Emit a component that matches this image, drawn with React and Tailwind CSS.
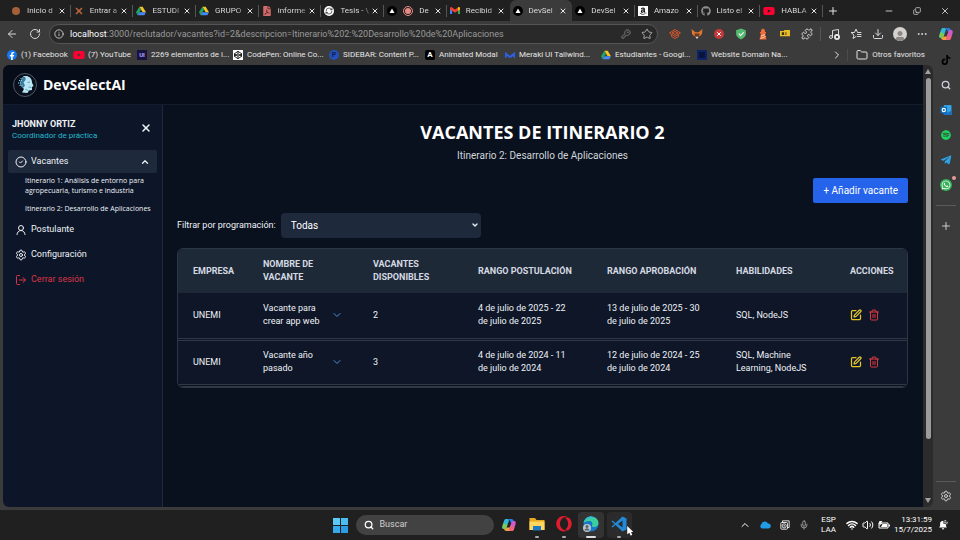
import React from "react";
import {
  ArrowLeft, RotateCw, Info, Search, Star, Puzzle, Music, Download, Plus, Minus, X, Copy, Ellipsis,
  ChevronRight, ChevronDown, ChevronUp, Folder, CircleCheck, UserRound, Settings, LogOut, SquarePen,
  Trash2, Wifi, Volume2, Mic, KeyRound, RefreshCw,
} from "lucide-react";
import {
  FaFacebookF, FaYoutube, FaAmazon, FaGithub, FaCodepen, FaSpotify, FaTelegramPlane,
  FaWhatsapp, FaTiktok, FaOpera, FaFilePdf, FaUser,
} from "react-icons/fa";

const Drive = () => (
  <svg viewBox="0 0 24 22" className="h-2.5 w-2.5 shrink-0">
    <path d="M8 1h8l8 13h-8z" fill="#f7c325" />
    <path d="M8 1l4 7-8 13-4-7z" fill="#1fa463" />
    <path d="M8 14h16l-4 7H4z" fill="#4688f4" />
  </svg>
);

const Gmail = () => (
  <svg viewBox="0 0 24 18" className="w-2.5 shrink-0">
    <path d="M0 3v15h5V6z" fill="#4285f4" />
    <path d="M24 3v15h-5V6z" fill="#34a853" />
    <path d="M0 3c0-3 3-4 5-2l7 5 7-5c2-2 5-1 5 2v3l-12 8L0 6z" fill="#ea4335" />
    <path d="M19 1c2-2 5-1 5 2v3l-5 3z" fill="#fbbc04" />
  </svg>
);

const Vercel = () => (
  <svg viewBox="0 0 20 20" className="h-2.5 w-2.5 shrink-0">
    <circle cx="10" cy="10" r="10" fill="#000" />
    <path d="M10 5l5 9H5z" fill="#fff" />
  </svg>
);

const Record = () => (
  <svg viewBox="0 0 20 20" className="h-2.5 w-2.5 shrink-0">
    <circle cx="10" cy="10" r="9" fill="none" stroke="#e88b86" strokeWidth="2" />
    <circle cx="10" cy="10" r="6" fill="#e88b86" />
  </svg>
);

const Youtube = () => <FaYoutube className="h-3 w-3 shrink-0 text-[#ff0033]" />;

const Copilot = () => (
  <svg viewBox="0 0 28 26" className="h-3.5 w-3.5 shrink-0">
    <path d="M9 1h10c3 0 4 2 5 5l1 3h-7l-2-4c-1-3-4-4-7-4z" fill="#2a7de8" />
    <path d="M9 1c4 0 6 1 4 6L9 18c-1 3-3 3-5 3-4 0-4-3-3-7L4 5c1-3 2-4 5-4z" fill="#35b8d8" />
    <path d="M3 9l-2 6c-1 4 0 6 4 6 2 0 3 0 4-3l2-5z" fill="#7fc950" />
    <path d="M19 25H9c-3 0-4-2-5-4 3 0 4-1 5-3h7l2 4c1 2 1 3 1 3z" fill="#f2a33c" />
    <path d="M19 25c-4 0-6-1-4-6l4-11c1-3 3-3 5-3 4 0 4 3 3 7l-3 9c-1 3-2 4-5 4z" fill="#d65ac6" />
    <path d="M19 25c-4 0-6-1-4-6l2-5 8 4-1 3c-1 3-2 4-5 4z" fill="#f0657a" />
  </svg>
);

const tabs = [
  { title: "Inicio d", icon: <span className="mx-px h-2 w-2 shrink-0 rounded-full bg-[#a5603a]" /> },
  { title: "Entrar a", icon: <X className="h-2.5 w-2.5 shrink-0 text-[#b8643a]" strokeWidth={4} /> },
  { title: "ESTUDI", icon: <Drive /> },
  { title: "GRUPO", icon: <Drive /> },
  { title: "informe", icon: <FaFilePdf className="h-2.5 w-2.5 shrink-0 text-[#d66a6a]" /> },
  { title: "Tesis - \\", icon: <span className="flex h-2.5 w-2.5 shrink-0 items-center justify-center rounded-full bg-white"><RefreshCw className="h-2 w-2 text-[#222]" /></span> },
  { title: "De", icon: <><Vercel /><span className="pl-1.5"><Record /></span></> },
  { title: "Recibid", icon: <Gmail /> },
  { title: "DevSel", icon: <Vercel />, active: true },
  { title: "DevSel", icon: <Vercel /> },
  { title: "Amazo", icon: <span className="flex h-2.5 w-2.5 shrink-0 items-center justify-center bg-white"><FaAmazon className="h-2 w-2 text-black" /></span> },
  { title: "Listo el", icon: <FaGithub className="h-2.5 w-2.5 shrink-0 text-[#8d8d8d]" /> },
  { title: "HABLA", icon: <Youtube /> },
];

function TabBar() {
  return (
    <div className="flex h-[21px] items-stretch bg-[#202020] pl-2 text-[8px] text-[#e4e4e4]">
      <div className="flex min-w-0 flex-1">
        {tabs.map((t, i) => (
          <div
            key={i}
            className={
              t.active
                ? "flex min-w-0 flex-1 items-center rounded-t-md bg-[#3b3b3b] pl-[3px]"
                : "flex min-w-0 flex-1 items-center pl-[3px]"
            }
          >
            {t.icon}
            <span className="ml-1.5 min-w-0 flex-1 bg-linear-to-r from-[#e8e8e8] from-70% to-[#e8e8e8]/20 bg-clip-text whitespace-nowrap text-transparent">
              {t.title}
            </span>
            <button aria-label="Cerrar pestaña" className="mr-1 shrink-0">
              <X className="h-2 w-2" strokeWidth={3} />
            </button>
            <span className={t.active || i === 7 ? "w-px" : "h-3 w-px bg-[#555]"} />
          </div>
        ))}
      </div>
      <div className="flex w-[137px] items-center pl-1">
        <button aria-label="Nueva pestaña"><Plus className="h-3 w-3" /></button>
        <div className="flex flex-1 items-center justify-end gap-[19px] pr-2.5">
          <button aria-label="Minimizar"><Minus className="h-2.5 w-2.5" /></button>
          <button aria-label="Restaurar"><Copy className="h-2 w-2 -scale-x-100 rotate-180" /></button>
          <button aria-label="Cerrar"><X className="h-2.5 w-2.5" /></button>
        </div>
      </div>
    </div>
  );
}

const Shield = () => (
  <svg viewBox="0 0 22 22" className="h-3 w-3">
    <path d="M11 1l9 3v6c0 6-5 9-9 11-4-2-9-5-9-11V4z" fill="#55b870" />
    <path d="M7 10l3 4 6-6" fill="none" stroke="#fff" strokeWidth="2" />
  </svg>
);

const Mesh = () => (
  <svg viewBox="0 0 24 20" className="h-3 w-3" fill="none" stroke="#d9562b" strokeWidth="2">
    <path d="M1 8l11-7 11 7-11 7zM5 11v4l7 4 7-4v-4M6 8l6-3 6 3-6 3z" />
  </svg>
);

const Fox = () => (
  <svg viewBox="0 0 22 22" className="h-3 w-3">
    <path d="M1 2l7 6h6l7-6-1 9-4 4H6l-4-4z" fill="#e07832" />
    <path d="M6 10h10l-2 7-3 2-3-2z" fill="#6b3a20" />
    <path d="M8 16h6l-3 4z" fill="#ddd" />
  </svg>
);

const FavStar = () => (
  <svg viewBox="0 0 24 24" className="h-3 w-3" fill="none" stroke="currentColor" strokeWidth="2" strokeLinejoin="round" strokeLinecap="round">
    <path d="M12 17l-6 4 2-7-6-5h7l3-7 3 7h7M15 13h7M15 17h7" />
  </svg>
);

const extensions = [
  { name: "Capas", icon: <Mesh /> },
  { name: "Cartera", icon: <Fox /> },
  { name: "Bloqueador", icon: <span className="flex h-2.5 w-2.5 items-center justify-center rounded-full bg-[#c43a3a]"><X className="h-1.5 w-1.5 text-white" strokeWidth={4} /></span> },
  { name: "Protección", icon: <Shield /> },
  {
    name: "Faro",
    icon: (
      <svg viewBox="0 0 20 24" className="h-3 w-3">
        <path d="M6 8V4l4-3 4 3v4h2v3h-2l3 12H3l3-12H4V8z" fill="#ef6c3a" />
        <path d="M6 16l8-3M5 21l10-4" stroke="#ffd0a8" strokeWidth="2" />
      </svg>
    ),
  },
  {
    name: "Notas",
    icon: (
      <svg viewBox="0 0 22 14" className="w-2.5">
        <path d="M0 2h8l2-2h12v14H0z" fill="#e8bd2c" />
        <path d="M4 5h5v6H4zM12 5h2v6h-2z" fill="#3a2f08" />
      </svg>
    ),
  },
  { name: "Extensiones", icon: <Puzzle className="h-3 w-3" /> },
  {
    name: "Multimedia",
    icon: (
      <span className="relative">
        <Music className="h-3 w-3" />
        <span className="absolute right-0 bottom-0 h-1.5 w-1.5 rounded-full bg-[#e4e4e4] p-0.5"><span className="block h-full bg-[#3b3b3b]" /></span>
      </span>
    ),
  },
  { name: "Favoritos", icon: <FavStar /> },
  { name: "Descargas", icon: <Download className="h-3 w-3" /> },
  { name: "Perfil", icon: <span className="flex h-3.5 w-3.5 items-end justify-center overflow-hidden rounded-full bg-[#d4d1ce]"><FaUser className="h-2.5 w-2.5 text-[#8a8785]" /></span> },
  { name: "Más", icon: <Ellipsis className="h-3 w-3" /> },
];

function Toolbar() {
  return (
    <div className="flex h-[25px] items-center text-[#d8d8d8]">
      <button aria-label="Atrás" className="ml-1.5"><ArrowLeft className="h-3 w-3" /></button>
      <button aria-label="Recargar" className="ml-[11px]"><RotateCw className="h-3 w-3" /></button>
      <div className="ml-2 flex h-5 min-w-0 flex-1 items-center rounded-full border border-[#555] bg-[#292929] pr-1 pl-1">
        <Info className="h-2.5 w-2.5 shrink-0" />
        <span className="ml-1.5 min-w-0 flex-1 whitespace-nowrap text-[9px] leading-3 text-[#9a9a9a]">
          <span className="text-white">localhost</span>:3000/reclutador/vacantes?id=2&amp;descripcion=Itinerario%202:%20Desarrollo%20de%20Aplicaciones
        </span>
        <button aria-label="Contraseñas"><KeyRound className="h-2.5 w-2.5 text-[#8a8a8a]" /></button>
        <button aria-label="Añadir a favoritos" className="ml-2.5"><Star className="h-3 w-3 text-[#aaa]" /></button>
      </div>
      <div className="ml-1.5 flex shrink-0 items-center">
        {extensions.map((e, i) => (
          <React.Fragment key={e.name}>
            <button aria-label={e.name} className="flex w-[22px] items-center justify-center">{e.icon}</button>
            {i === 6 && <span className="mx-0.5 h-3.5 w-px bg-[#555]" />}
          </React.Fragment>
        ))}
      </div>
    </div>
  );
}

const bookmarks = [
  { label: "(1) Facebook", w: "w-[67px]", icon: <span className="flex h-2.5 w-2.5 items-end justify-center rounded-full bg-[#1877f2]"><FaFacebookF className="h-2 w-2 text-white" /></span> },
  { label: "(7) YouTube", w: "w-[63px]", icon: <Youtube /> },
  { label: "2269 elementos de i...", w: "w-[96px]", icon: <span className="h-2.5 w-2.5 bg-[#17123f] text-center text-[6px] leading-[10px] font-bold text-[#b9a8ff]">UI</span> },
  { label: "CodePen: Online Co...", w: "w-[96px]", icon: <span className="flex h-2.5 w-2.5 items-center justify-center bg-white"><FaCodepen className="h-2 w-2 text-black" /></span> },
  { label: "SIDEBAR: Content P...", w: "w-[96px]", icon: <span className="flex h-2.5 w-2.5 items-center justify-center rounded-full bg-[#2450b8] text-[7px] font-bold text-[#0f2150]">P</span> },
  { label: "Animated Modal", w: "w-[80px]", icon: <span className="flex h-2.5 w-2.5 items-center justify-center rounded-xs bg-black text-[8px] font-bold text-white">A</span> },
  {
    label: "Meraki UI Tailwind...",
    w: "w-[96px]",
    icon: (
      <svg viewBox="0 0 24 20" className="h-2.5 w-2.5">
        <path d="M0 19V2l12 10L24 2v17l-5-6-7 5-7-5z" fill="#2f5fe0" />
      </svg>
    ),
  },
  { label: "Estudiantes - Googl...", w: "w-[96px]", icon: <Drive /> },
  { label: "Website Domain Na...", w: "w-[96px]", icon: <span className="h-2.5 w-2.5 bg-[#0d2468] p-0.5"><span className="block h-full bg-[#08143a]" /></span> },
];

function Bookmarks() {
  return (
    <div className="flex h-[19px] items-center pb-px pl-[7px] text-[8px] text-[#e6e6e6]">
      {bookmarks.map((b) => (
        <a key={b.label} href="#" className={`flex shrink-0 items-center gap-1 whitespace-nowrap ${b.w}`}>
          <span className="flex w-2.5 shrink-0 justify-center">{b.icon}</span>
          {b.label}
        </a>
      ))}
      <div className="flex flex-1 items-center justify-end pr-2">
        <ChevronRight className="h-3 w-3" />
        <span className="mr-2 ml-1 h-3 w-px bg-[#4b4b4b]" />
        <a href="#" className="flex items-center gap-1 whitespace-nowrap">
          <Folder className="h-3 w-3" />
          Otros favoritos
        </a>
      </div>
    </div>
  );
}

function EdgeRail() {
  return (
    <aside className="flex w-[27px] shrink-0 flex-col items-center pr-px pb-2">
      <div className="flex h-[25px] items-center"><Copilot /></div>
      <div className="mt-px flex flex-1 flex-col items-center">
        <button aria-label="TikTok" className="flex h-[25px] items-center"><FaTiktok className="h-2.5 w-2.5 text-black" /></button>
        <button aria-label="Buscar" className="flex h-[25px] items-center text-[#d0d0e0]"><Search className="h-2.5 w-2.5" strokeWidth={3} /></button>
        <button aria-label="Outlook" className="flex h-[25px] items-center">
          <svg viewBox="0 0 22 22" className="h-3 w-3">
            <path d="M7 2h14v18H7z" fill="#35a8ea" />
            <path d="M7 12l7 4 7-4v8H7z" fill="#1a72c8" />
            <path d="M1 5h12v12H1z" fill="#0f6cbd" />
            <circle cx="7" cy="11" r="3" fill="none" stroke="#fff" strokeWidth="2" />
          </svg>
        </button>
        <button aria-label="Spotify" className="flex h-[25px] items-center"><FaSpotify className="h-2.5 w-2.5 text-[#1ed760]" /></button>
        <button aria-label="Telegram" className="flex h-[25px] items-center"><FaTelegramPlane className="h-3 w-3 text-[#2ba3e4]" /></button>
        <button aria-label="WhatsApp" className="relative flex h-[25px] items-center">
          <span className="flex h-3 w-3 items-center justify-center rounded-full bg-[#35b35a]"><FaWhatsapp className="h-2.5 w-2.5 text-white" /></span>
          <span className="absolute top-1 -right-1 h-1 w-1 rounded-full bg-[#e99a9a]" />
        </button>
        <span className="mt-2 h-px w-5 bg-[#5a5a5a]" />
        <button aria-label="Añadir" className="mt-3.5 text-[#ccc]"><Plus className="h-3 w-3" /></button>
      </div>
      <span className="mb-2 h-px w-5 bg-[#5a5a5a]" />
      <button aria-label="Configuración del navegador" className="text-[#d0d0d0]"><Settings className="h-3 w-3" /></button>
    </aside>
  );
}

const Logo = () => (
  <svg viewBox="0 0 48 48" className="h-6 w-6">
    <circle cx="24" cy="24" r="23" fill="#0a101c" stroke="#687386" strokeWidth="1.5" />
    <path d="M20 7c10-3 18 3 18 12l3 7-3 2v6l-6 1-3 5-11-1 4-7c-4-3-6-6-5-12z" fill="#b9e6f4" />
    <path d="M20 7c5 0 6 3 5 7l-4 5 3 6-4 5c-6-3-8-8-6-14z" fill="#3b7c9c" />
    <path d="M12 15h6M10 20h7M13 25h6M15 11h5" stroke="#8fd0e6" strokeWidth="2" strokeDasharray="2 2" />
    <path d="M29 19l5-1M31 28l6 1M25 33l6 2" stroke="#4787a5" strokeWidth="1.5" />
  </svg>
);

function Sidebar() {
  return (
    <aside className="w-40 shrink-0 border-r border-[#1f2937] bg-[#0d1628] px-[5px] pt-[13px] text-[9px] text-[#eef2f7]">
      <div className="flex items-start justify-between pr-[5px] pl-1">
        <div>
          <p className="leading-3 font-bold">JHONNY ORTIZ</p>
          <p className="text-[8px] leading-3 text-[#22b8cf]">Coordinador de práctica</p>
        </div>
        <button aria-label="Cerrar menú" className="pt-1"><X className="h-3 w-3" strokeWidth={3} /></button>
      </div>
      <nav className="mt-2">
        <button className="flex h-[23px] w-full items-center gap-1 rounded-xs bg-[#1e293b] px-[7px]">
          <CircleCheck className="h-3 w-3" />
          Vacantes
          <ChevronUp className="ml-auto h-2.5 w-2.5" strokeWidth={3} />
        </button>
        <div className="flex flex-col gap-2 pt-[3px] pl-[17px] font-['Open_Sans','Noto_Sans',sans-serif] text-[7px] leading-[10px]">
          <a href="#">Itinerario 1: Análisis de entorno para<br />agropecuaria, turismo e industria</a>
          <a href="#" className="whitespace-nowrap">Itinerario 2: Desarrollo de Aplicaciones</a>
        </div>
        <a href="#" className="mt-[3px] flex h-[25px] items-center gap-1 px-[7px]"><UserRound className="h-3 w-3" />Postulante</a>
        <a href="#" className="flex h-[25px] items-center gap-1 px-[7px]"><Settings className="h-3 w-3" />Configuración</a>
        <button className="flex h-[25px] items-center gap-1 px-[7px] text-[#dc3545]"><LogOut className="h-3 w-3" />Cerrar sesión</button>
      </nav>
    </aside>
  );
}

const rows = [
  { empresa: "UNEMI", nombre: "Vacante para crear app web", disp: 2, post: "4 de julio de 2025 - 22 de julio de 2025", apro: "13 de julio de 2025 - 30 de julio de 2025", hab: "SQL, NodeJS" },
  { empresa: "UNEMI", nombre: "Vacante año pasado", disp: 3, post: "4 de julio de 2024 - 11 de julio de 2024", apro: "12 de julio de 2024 - 25 de julio de 2024", hab: "SQL, Machine Learning, NodeJS" },
];

function Vacancies() {
  return (
    <main className="min-w-0 flex-1 bg-[#0a111e] pt-4 pr-[15px] pl-3.5 text-[#eef2f7]">
      <h1 className="text-center font-['Open_Sans','Noto_Sans',sans-serif] text-[18px] leading-[23px] font-bold text-white">VACANTES DE ITINERARIO 2</h1>
      <p className="mt-1 text-center text-[10px] leading-4 text-[#d1d5db]">Itinerario 2: Desarrollo de Aplicaciones</p>
      <div className="mt-3.5 flex justify-end">
        <button className="h-[25px] rounded-xs bg-[#2563eb] px-2.5 text-[10px] text-white">+ Añadir vacante</button>
      </div>
      <div className="mt-2.5 flex items-center gap-[5px]">
        <label htmlFor="programacion" className="text-[9px]">Filtrar por programación:</label>
        <div className="relative">
          <select id="programacion" className="block h-[25px] w-[200px] appearance-none rounded-sm bg-[#1e293b] px-2.5 text-[10px] text-white">
            <option>Todas</option>
          </select>
          <ChevronDown className="pointer-events-none absolute top-2 right-0.5 h-2 w-2" strokeWidth={4} />
        </div>
      </div>
      <div className="mt-2.5 overflow-hidden rounded-md border border-[#2b3646]">
        <table className="w-full table-fixed text-left text-[9px] leading-[13px]">
          <colgroup>
            <col className="w-[70px]" /><col className="w-[110px]" /><col className="w-[105px]" /><col className="w-[129px]" />
            <col className="w-[129px]" /><col className="w-[114px]" /><col />
          </colgroup>
          <thead className="bg-[#1e2938] text-[#d5dae2]">
            <tr className="h-11">
              {["EMPRESA", "NOMBRE DE VACANTE", "VACANTES DISPONIBLES", "RANGO POSTULACIÓN", "RANGO APROBACIÓN", "HABILIDADES", "ACCIONES"].map((h) => (
                <th key={h} className={h.startsWith("RANGO") || h === "ACCIONES" ? "pl-[15px] font-bold whitespace-nowrap" : "px-[15px] font-bold"}>{h}</th>
              ))}
            </tr>
          </thead>
          <tbody className="bg-[#0e1627]">
            {rows.map((r) => (
              <tr key={r.nombre} className="h-[46px] border-b-3 border-double border-[#2f3948]">
                <td className="px-[15px]">{r.empresa}</td>
                <td className="px-[15px]">
                  <div className="flex items-center justify-between">
                    <span className="w-[60px]">{r.nombre}</span>
                    <button aria-label="Ver detalle"><ChevronDown className="h-3 w-3 text-[#4b8fdc]" /></button>
                  </div>
                </td>
                <td className="px-[15px]">{r.disp}</td>
                <td className="px-[15px]">{r.post}</td>
                <td className="px-[15px]">{r.apro}</td>
                <td className="px-[15px]">{r.hab}</td>
                <td className="pl-[15px]">
                  <div className="flex gap-1.5">
                    <button aria-label="Editar"><SquarePen className="h-3 w-3 text-[#e3c62a]" strokeWidth={2.5} /></button>
                    <button aria-label="Eliminar"><Trash2 className="h-3 w-3 text-[#d93a41]" /></button>
                  </div>
                </td>
              </tr>
            ))}
          </tbody>
        </table>
      </div>
    </main>
  );
}

function Scrollbar() {
  return (
    <div className="flex w-2.5 shrink-0 flex-col items-center bg-[#2b2b2b] py-1">
      <svg viewBox="0 0 6 5" className="w-1.5"><path d="M3 0l3 5H0z" fill="#a0a0a0" /></svg>
      <div className="mt-1 flex w-full flex-1 flex-col items-center">
        <span className="h-[86%] w-[5px] rounded-full bg-[#9c9c9c]" />
      </div>
      <svg viewBox="0 0 6 5" className="w-1.5"><path d="M3 5l3-5H0z" fill="#a0a0a0" /></svg>
    </div>
  );
}

function Taskbar() {
  return (
    <footer className="grid h-[30px] grid-cols-[1fr_auto_1fr] items-center bg-[#202020] text-white">
      <span />
      <div className="flex items-center pl-1">
        <button aria-label="Inicio" className="grid h-[15px] w-[15px] grid-cols-2 gap-px">
          <span className="bg-[#5cc8f5]" /><span className="bg-[#4bbdf2]" /><span className="bg-[#35a9ec]" /><span className="bg-[#2b9be6]" />
        </button>
        <label className="ml-2 flex h-5 w-[138px] items-center gap-1.5 rounded-full bg-[#434243] px-2">
          <Search className="h-2.5 w-2.5 shrink-0" strokeWidth={3} />
          <input aria-label="Buscar" placeholder="Buscar" className="w-full min-w-0 bg-transparent text-[9px] outline-none placeholder:text-[#d0d0d0]" />
        </label>
        <button aria-label="Copilot" className="flex w-[30px] justify-center"><Copilot /></button>
        <button aria-label="Explorador" className="flex w-[27px] flex-col items-center gap-1 pt-1">
          <svg viewBox="0 0 32 28" className="h-4 w-4">
            <path d="M1 2h11l3 4h16v20H1z" fill="#e8a820" />
            <path d="M1 9h30v17H1z" fill="#ffd75e" />
            <path d="M8 18h16v9H8z" fill="#1d78c8" />
          </svg>
          <span className="h-0.5 w-1 rounded-full bg-[#aaa]" />
        </button>
        <button aria-label="Opera" className="flex w-[27px] flex-col items-center gap-1 pt-1">
          <FaOpera className="h-4 w-4 text-[#e31b2f]" />
          <span className="h-0.5 w-1 rounded-full bg-[#aaa]" />
        </button>
        <button aria-label="Edge" className="flex h-[26px] w-[26px] flex-col items-center gap-1 rounded-sm bg-[#333] pt-1">
          <svg viewBox="0 0 32 32" className="h-4 w-4">
            <circle cx="16" cy="16" r="15" fill="#1976c9" />
            <path d="M1 14C3 5 9 1 16 1c9 0 15 6 15 13 0 5-4 8-9 8-3 0-5-1-4-3 3-6-1-9-6-9-5 0-9 2-11 4z" fill="#3ccf9c" />
            <path d="M1 14C4 4 11 1 16 1c5 0 8 2 10 4-8-3-19-1-25 9z" fill="#35b8e0" />
            <circle cx="8" cy="24" r="8" fill="#b9c6cf" />
            <circle cx="8" cy="21" r="3" fill="#59636b" />
            <path d="M3 29c1-6 9-6 10 0z" fill="#59636b" />
          </svg>
          <span className="h-0.5 w-2.5 rounded-full bg-[#ddd]" />
        </button>
        <button aria-label="Visual Studio Code" className="relative ml-[3px] flex h-[26px] w-[25px] flex-col items-center gap-1 rounded-sm bg-[#2b2b2b] pt-1">
          <svg viewBox="0 0 32 32" className="h-4 w-4">
            <path d="M23 1l8 4v22l-8 4L9 18l-6 5-2-2 6-5-6-5 2-2 6 5zM23 9l-9 7 9 7z" fill="#2389d7" fillRule="evenodd" />
          </svg>
          <span className="h-0.5 w-1 rounded-full bg-[#aaa]" />
          <svg viewBox="0 0 12 18" className="absolute top-3.5 -right-0.5 h-2.5 w-2">
            <path d="M1 0v15l4-3 2 5 3-1-2-5h4z" fill="#fff" />
          </svg>
        </button>
      </div>
      <div className="flex items-center justify-end pr-3">
        <ChevronUp className="h-3 w-3" />
        <svg viewBox="0 0 24 16" className="ml-2 w-3"><path d="M6 15a5 5 0 0 1-1-9 7 7 0 0 1 13-1 5 5 0 0 1 1 10z" fill="#1f9be8" /></svg>
        <svg viewBox="0 0 24 24" className="ml-[9px] h-2.5 w-2.5" fill="none" stroke="currentColor" strokeWidth="2">
          <path d="M6 6V2h16v16h-4" />
          <rect x="2" y="6" width="16" height="16" rx="2" />
          <circle cx="10" cy="14" r="5" />
          <circle cx="10" cy="14" r="1" />
        </svg>
        <Mic className="ml-[9px] h-2.5 w-2.5 text-[#aaa]" />
        <span className="mr-2.5 ml-3 text-center text-[8px] leading-[10px]">ESP<br />LAA</span>
        <Wifi className="h-3 w-3" strokeWidth={3} />
        <Volume2 className="ml-1 h-3 w-3" />
        <svg viewBox="0 0 24 16" className="ml-1 w-3">
          <path d="M2 4h18v10H2z" fill="none" stroke="#fff" strokeWidth="2" />
          <path d="M9 6h9v6H6zM21 7h3v4h-3z" fill="#fff" />
          <path d="M3 0h6L6 4h3L2 10l2-5H1z" fill="#fff" />
        </svg>
        <span className="ml-1 text-right text-[8px] leading-[10px]">13:31:59<br />15/7/2025</span>
        <svg viewBox="0 0 24 24" className="ml-1.5 h-2.5 w-2.5">
          <path d="M3 18l2-4V9c0-5 4-7 8-7v7h6v5l2 4zM9 20h6c-1 4-5 4-6 0z" fill="#fff" />
          <path d="M15 1h4l-4 5h4M20 5h3l-3 4h3" fill="none" stroke="#fff" strokeWidth="1.5" />
        </svg>
      </div>
    </footer>
  );
}

export default function App() {
  return (
    <div className="flex min-h-screen flex-col bg-[#3b3b3b] font-['Roboto','Open_Sans',sans-serif]">
      <TabBar />
      <div className="flex flex-1">
        <div className="flex min-w-0 flex-1 flex-col">
          <Toolbar />
          <Bookmarks />
          <div className="mb-[3px] ml-[3px] flex flex-1 overflow-hidden rounded-md">
            <div className="flex min-w-0 flex-1 flex-col">
              <header className="flex h-10 items-center gap-1.5 border-b border-[#121c2c] bg-[#060c18] pl-2.5">
                <Logo />
                <span className="font-['Open_Sans','Noto_Sans',sans-serif] text-[14px] font-bold text-white">DevSelectAI</span>
              </header>
              <div className="flex flex-1">
                <Sidebar />
                <Vacancies />
              </div>
            </div>
            <Scrollbar />
          </div>
        </div>
        <EdgeRail />
      </div>
      <Taskbar />
    </div>
  );
}
